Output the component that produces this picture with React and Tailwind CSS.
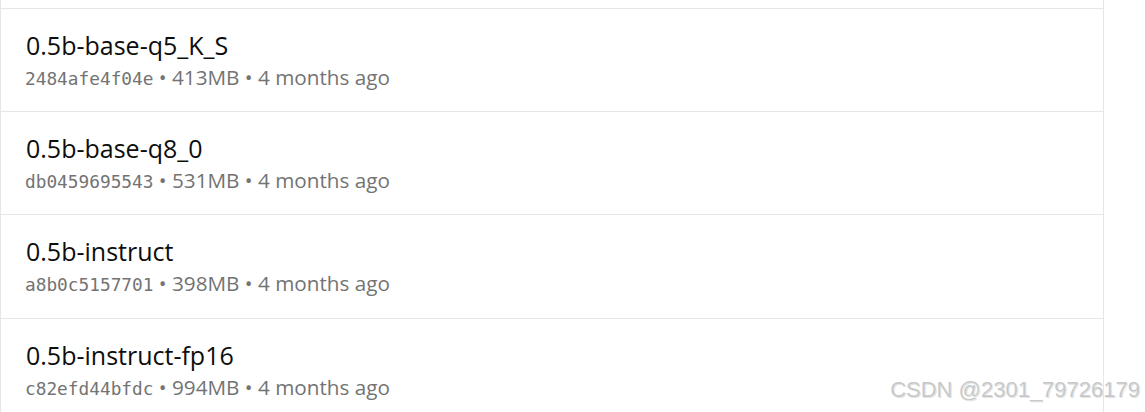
import React from "react";

const rows = [
  { name: "0.5b-base-q5_K_S", hash: "2484afe4f04e", size: "413MB", age: "4 months ago" },
  { name: "0.5b-base-q8_0", hash: "db0459695543", size: "531MB", age: "4 months ago" },
  { name: "0.5b-instruct", hash: "a8b0c5157701", size: "398MB", age: "4 months ago" },
  { name: "0.5b-instruct-fp16", hash: "c82efd44bfdc", size: "994MB", age: "4 months ago" },
];

export default function App() {
  return (
    <div className="relative w-[1145px] h-[412px] overflow-hidden bg-white" style={{ fontFamily: '"Open Sans", "Noto Sans", sans-serif' }}>
      <div className="w-[1104px] border-x border-[#e6e6e6] h-full">
        <div className="h-[9px] border-b border-[#e6e6e6]" />
        {rows.map((r, i) => (
          <div key={r.hash} className={`${i === 2 ? "h-[104px]" : "h-[103px]"} border-b border-[#e6e6e6] pl-[24px] pr-[25px] pt-[20px]`}>
            <div className="pl-[1px] text-[25px] leading-[32px] text-[#0d0d0d]">{r.name}</div>
            <div className="text-[20.7px] leading-[32px] text-[#737373]">
              <span style={{ fontFamily: '"DejaVu Sans Mono", monospace' }} className="text-[17.8px]">{r.hash}</span>
              {" • "}{r.size}{" • "}{r.age}
            </div>
          </div>
        ))}
      </div>
      <div className="absolute right-[5px] bottom-[6px] text-[22px] text-[#c8c8c8]" style={{ fontFamily: '"Liberation Sans", Arial, sans-serif', textShadow: "0 0 1px #ffffff, 1px 1px 0 #e0e0e0" }}>
        CSDN @2301_79726179
      </div>
    </div>
  );
}
